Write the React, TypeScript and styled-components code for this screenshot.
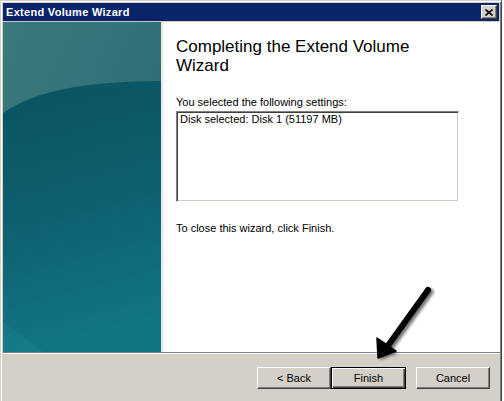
import React from 'react'
import styled, { createGlobalStyle } from 'styled-components'

const GlobalStyle = createGlobalStyle`
  html, body {
    margin: 0;
    padding: 0;
    background: #ffffff;
    overflow: hidden;
  }
  body {
    font-family: 'Liberation Sans', Arial, sans-serif;
  }
`

const Page = styled(`div`)`
  position: relative;
  width: 504px;
  height: 401px;
  overflow: hidden;
`

const Window = styled(`div`)`
  width: 502px;
  height: 420px;
  box-sizing: border-box;
  background: #d4d0c8;
  border-top: 1px solid #d4d0c8;
  border-left: 1px solid #d4d0c8;
  border-right: 1px solid #404040;
  box-shadow: inset 1px 1px #ffffff, inset -1px 0 #808080;
  padding: 2px 1px 0 2px;
  display: flex;
  flex-direction: column;
`

const TitleBar = styled(`div`)`
  height: 18px;
  background: #0a246a;
  display: flex;
  align-items: center;
  justify-content: space-between;
  padding: 0 2px 0 2px;
  margin-right: 1px;
`

const TitleText = styled(`span`)`
  color: #ffffff;
  font-weight: 700;
  font-size: 11px;
  letter-spacing: 0.3px;
  padding-left: 1px;
`

const CloseButton = styled(`div`)`
  width: 16px;
  height: 14px;
  box-sizing: border-box;
  background: #d4d0c8;
  border-top: 1px solid #ffffff;
  border-left: 1px solid #ffffff;
  border-right: 1px solid #404040;
  border-bottom: 1px solid #404040;
  box-shadow: inset -1px -1px #808080;
  display: flex;
  align-items: center;
  justify-content: center;
`

const Body = styled(`div`)`
  margin-top: 1px;
  height: 330px;
  display: flex;
  flex-direction: row;
  background: #ffffff;
`

const Sidebar = styled(`div`)`
  width: 158px;
  flex-shrink: 0;
  position: relative;
  z-index: 1;
  box-shadow: 1px 0 0 #e8e8e8, 2px 0 2px rgba(0, 0, 0, 0.12);
  svg {
    display: block;
  }
`

const Main = styled(`div`)`
  flex: 1;
  padding: 15px 0 0 15px;
  display: flex;
  flex-direction: column;
  color: #000000;
`

const Heading = styled(`h1`)`
  margin: 0;
  width: 284px;
  font-weight: 400;
  font-size: 17px;
  line-height: 19px;
`

const Label = styled(`p`)`
  margin: ${props => props.$top || 0}px 0 0 0;
  font-size: 11px;
  line-height: 13px;
`

const ListBox = styled(`div`)`
  margin-top: 2px;
  width: 283px;
  height: 91px;
  box-sizing: border-box;
  background: #ffffff;
  border-top: 1px solid #808080;
  border-left: 1px solid #808080;
  border-right: 1px solid #ffffff;
  border-bottom: 1px solid #ffffff;
  box-shadow: inset 1px 1px #404040, inset -1px -1px #d4d0c8;
  padding: 1px 0 0 3px;
  font-size: 11px;
  line-height: 13px;
`

const Separator = styled(`div`)`
  height: 1px;
  background: #808080;
  border-bottom: 1px solid #ffffff;
`

const Footer = styled(`div`)`
  display: flex;
  justify-content: flex-end;
  align-items: flex-start;
  padding: 13px 10px 0 0;
`

const ButtonGroup = styled(`div`)`
  display: flex;
  margin-right: 10px;
`

const Button = styled(`button`)`
  width: ${props => (props.$default ? 75 : 74)}px;
  height: 22px;
  box-sizing: border-box;
  padding: 0;
  background: #d4d0c8;
  font-family: 'Liberation Sans', Arial, sans-serif;
  font-size: 11px;
  color: #000000;
  border-top: 1px solid ${props => (props.$default ? '#000000' : '#ffffff')};
  border-left: 1px solid ${props => (props.$default ? '#000000' : '#ffffff')};
  border-right: 1px solid ${props => (props.$default ? '#000000' : '#404040')};
  border-bottom: 1px solid ${props => (props.$default ? '#000000' : '#404040')};
  box-shadow: ${props =>
    props.$default
      ? 'inset 1px 1px #ffffff, inset -1px -1px #404040, inset -2px -2px #808080'
      : 'inset -1px -1px #808080'};
`

const ArrowLayer = styled(`svg`)`
  position: absolute;
  left: 0;
  top: 0;
  pointer-events: none;
`

function SidebarArt() {
  return (
    <svg width="158" height="330" viewBox="0 0 158 330">
      <defs>
        <linearGradient id="topBand" x1="0" y1="0" x2="1" y2="1">
          <stop offset="0" stopColor="#3b797c" />
          <stop offset="1" stopColor="#286970" />
        </linearGradient>
        <linearGradient id="mainBand" x1="0" y1="0" x2="0.15" y2="1">
          <stop offset="0" stopColor="#0a5361" />
          <stop offset="0.5" stopColor="#0e5f6e" />
          <stop offset="1" stopColor="#127584" />
        </linearGradient>
      </defs>
      <rect width="158" height="330" fill="url(#topBand)" />
      <path d="M0,91 C30,71 70,60 158,59 L158,330 L0,330 Z" fill="url(#mainBand)" />
      <path d="M0,300 L40,330 L0,330 Z" fill="#17828a" opacity="0.5" />
    </svg>
  )
}

export default function App() {
  return (
    <Page>
      <GlobalStyle />
      <Window>
        <TitleBar>
          <TitleText>Extend Volume Wizard</TitleText>
          <CloseButton>
            <svg width="8" height="7" viewBox="0 0 8 7">
              <path d="M0.5,0.5 L7.5,6.5 M7.5,0.5 L0.5,6.5" stroke="#000" strokeWidth="1.6" />
            </svg>
          </CloseButton>
        </TitleBar>
        <Body>
          <Sidebar>
            <SidebarArt />
          </Sidebar>
          <Main>
            <Heading>Completing the Extend Volume Wizard</Heading>
            <Label $top={21}>You selected the following settings:</Label>
            <ListBox>Disk selected: Disk 1 (51197 MB)</ListBox>
            <Label $top={20}>To close this wizard, click Finish.</Label>
          </Main>
        </Body>
        <Separator />
        <Footer>
          <ButtonGroup>
            <Button>&lt; Back</Button>
            <Button $default>Finish</Button>
          </ButtonGroup>
          <Button>Cancel</Button>
        </Footer>
      </Window>
      <ArrowLayer width="504" height="401" viewBox="0 0 504 401">
        <defs>
          <filter id="blur" x="-20%" y="-20%" width="140%" height="140%">
            <feGaussianBlur stdDeviation="1.6" />
          </filter>
        </defs>
        <g filter="url(#blur)" opacity="0.55" transform="translate(2,2)">
          <path d="M428,290 L387,347" stroke="#000" strokeWidth="7" strokeLinecap="round" />
          <path d="M378,358 L377,338 L396,351 Z" fill="#000" />
        </g>
        <path d="M428,290 L387,347" stroke="#000" strokeWidth="6" strokeLinecap="round" />
        <path d="M378,358 L377,338 L396,351 Z" fill="#000" stroke="#000" strokeWidth="1.5" strokeLinejoin="round" />
      </ArrowLayer>
    </Page>
  )
}
